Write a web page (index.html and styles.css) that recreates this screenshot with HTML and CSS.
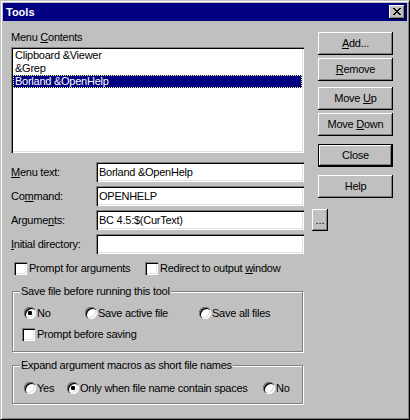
FILE: index.html
```html
<!DOCTYPE html>
<html>
<head>
<meta charset="utf-8">
<link rel="stylesheet" href="styles.css">
</head>
<body>
<div class="window">
  <div class="titlebar">
    <span class="title">Tools</span>
    <div class="close-btn">
      <svg class="close-x" width="8" height="7" viewBox="0 0 8 7" shape-rendering="crispEdges"><path fill="#000" d="M0 0h2v1H0zM6 0h2v1H6zM1 1h2v1H1zM5 1h2v1H5zM2 2h4v1H2zM3 3h2v1H3zM2 4h4v1H2zM1 5h2v1H1zM5 5h2v1H5zM0 6h2v1H0zM6 6h2v1H6z"/></svg>
    </div>
  </div>
  <div class="body">
    <div class="left">
      <div class="list-label">Menu <span class="acc">C</span>ontents</div>
      <div class="listbox">
        <div class="item">Clipboard &amp;Viewer</div>
        <div class="item">&amp;Grep</div>
        <div class="item selected">Borland &amp;OpenHelp</div>
      </div>
      <div class="fields">
        <div class="frow"><span class="flabel"><span class="acc">M</span>enu text:</span><div class="field">Borland &amp;OpenHelp</div></div>
        <div class="frow"><span class="flabel">Co<span class="acc">m</span>mand:</span><div class="field">OPENHELP</div></div>
        <div class="frow"><span class="flabel">Argume<span class="acc">n</span>ts:</span><div class="field">BC 4.5:$(CurText)</div><div class="ellipsis">...</div></div>
        <div class="frow"><span class="flabel"><span class="acc">I</span>nitial directory:</span><div class="field"></div></div>
      </div>
      <div class="checks">
        <div class="opt opt-prompt"><span class="check"></span><span>Prompt for arguments</span></div>
        <div class="opt"><span class="check"></span><span>Redirect to output <span class="acc">w</span>indow</span></div>
      </div>
      <fieldset class="group group-save">
        <legend>Save file before running this tool</legend>
        <div class="radios">
          <div class="opt opt-no"><span class="radio on"></span><span>No</span></div>
          <div class="opt opt-active"><span class="radio"></span><span>Save active file</span></div>
          <div class="opt"><span class="radio"></span><span>Save all files</span></div>
        </div>
        <div class="opt prompt-save"><span class="check"></span><span>Prompt before saving</span></div>
      </fieldset>
      <fieldset class="group group-expand">
        <legend>Expand argument macros as short file names</legend>
        <div class="radios radios-expand">
          <div class="opt opt-yes"><span class="radio"></span><span>Yes</span></div>
          <div class="opt opt-only"><span class="radio on"></span><span>Only when file name contain spaces</span></div>
          <div class="opt"><span class="radio"></span><span>No</span></div>
        </div>
      </fieldset>
    </div>
    <div class="buttons">
      <div class="btn"><span><span class="acc">A</span>dd...</span></div>
      <div class="btn btn-next"><span><span class="acc">R</span>emove</span></div>
      <div class="btn btn-group"><span>Move <span class="acc">U</span>p</span></div>
      <div class="btn btn-next"><span>Move <span class="acc">D</span>own</span></div>
      <div class="btn btn-default btn-far"><span>Close</span></div>
      <div class="btn btn-far"><span>Help</span></div>
    </div>
  </div>
</div>
</body>
</html>
```
FILE: styles.css
```css
* { box-sizing: border-box; }

body {
  margin: 0;
  font-family: "Liberation Sans", Arial, sans-serif;
  font-size: 11px;
  letter-spacing: -0.25px;
  color: #000;
  background: #c0c0c0;
}

.acc { text-decoration: underline; }

.window {
  width: 410px;
  height: 420px;
  background: #c0c0c0;
  border: 1px solid;
  border-color: #c0c0c0 #000 #000 #c0c0c0;
  box-shadow: inset 1px 1px #fff, inset -1px -1px #808080;
  padding: 2px;
  display: flex;
  flex-direction: column;
}

.titlebar {
  height: 18px;
  flex: none;
  background: #000080;
  display: flex;
  align-items: center;
  justify-content: space-between;
  padding: 0 2px 0 3px;
}

.title {
  color: #fff;
  font-weight: bold;
  line-height: 18px;
  letter-spacing: 0;
}

.close-btn {
  width: 16px;
  height: 14px;
  background: #c0c0c0;
  box-shadow: inset -1px -1px #000, inset 1px 1px #fff, inset -2px -2px #808080;
  padding: 3px 0 0 4px;
}

.close-x { display: block; }

.body {
  display: flex;
  flex: 1;
  padding-left: 8px;
}

.left {
  width: 307px;
  flex: none;
  display: flex;
  flex-direction: column;
}

.list-label {
  margin-top: 10px;
  line-height: 13px;
}

.sunken, .listbox, .field, .check {
  background: #fff;
  box-shadow: inset 1px 1px #808080, inset 2px 2px #000, inset -1px -1px #fff, inset -2px -2px #dfdfdf;
}

.listbox {
  margin-top: 3px;
  width: 293px;
  height: 106px;
  padding: 2px;
}

.item {
  height: 13px;
  line-height: 13px;
  padding-left: 2px;
  white-space: nowrap;
}

.item.selected {
  background: #000080;
  color: #fff;
  outline: 1px dotted #ffff80;
  outline-offset: -1px;
}

.fields {
  margin-top: 9px;
  display: flex;
  flex-direction: column;
  gap: 4px;
}

.frow {
  display: flex;
  align-items: center;
  height: 20px;
}

.flabel {
  width: 85px;
  flex: none;
  line-height: 13px;
}

.field {
  width: 208px;
  height: 20px;
  flex: none;
  padding-left: 3px;
  line-height: 20px;
  white-space: nowrap;
}

.ellipsis {
  width: 16px;
  height: 22px;
  flex: none;
  margin-left: 8px;
  background: #c0c0c0;
  box-shadow: inset -1px -1px #000, inset 1px 1px #fff, inset -2px -2px #808080;
  text-align: center;
  line-height: 22px;
  letter-spacing: 0;
}

.checks {
  margin-top: 8px;
  display: flex;
  height: 13px;
  padding-left: 3px;
}

.opt {
  display: flex;
  align-items: flex-start;
  line-height: 13px;
  white-space: nowrap;
}

.opt-prompt { width: 131px; flex: none; }

.check {
  width: 13px;
  height: 13px;
  flex: none;
  margin-right: 2px;
}

.group {
  margin: 10px 0 0 1px;
  width: 291px;
  min-width: 0;
  border: 1px solid #808080;
  box-shadow: inset 1px 1px #fff, 1px 1px #fff;
  padding: 0 0 10px 0;
}

.group legend {
  margin-left: 7px;
  padding: 0 1px;
  line-height: 13px;
  background: #c0c0c0;
}

.group-expand {
  margin-top: 7px;
  padding-bottom: 8px;
}

.radios {
  display: flex;
  margin-top: 9px;
  padding-left: 11px;
}

.radios-expand { margin-top: 10px; }

.opt-no { width: 61px; flex: none; }
.opt-active { width: 114px; flex: none; }
.opt-yes { width: 43px; flex: none; }
.opt-only { width: 196px; flex: none; }

.radio {
  position: relative;
  width: 12px;
  height: 12px;
  flex: none;
  margin-right: 1px;
  border-radius: 50%;
  background: #fff;
  box-shadow: inset 1px 1px #808080, inset 2px 2px #000, inset -1px -1px #fff, inset -2px -2px #dfdfdf;
}

.radio.on::after {
  content: "";
  position: absolute;
  left: 4px;
  top: 4px;
  width: 4px;
  height: 4px;
  border-radius: 1px;
  background: #000;
}

.prompt-save {
  margin-top: 8px;
  padding-left: 9px;
}

.buttons {
  width: 75px;
  flex: none;
  margin-left: 0;
  padding-top: 11px;
  display: flex;
  flex-direction: column;
}

.btn {
  height: 23px;
  display: flex;
  align-items: center;
  justify-content: center;
  line-height: 13px;
  background: #c0c0c0;
  box-shadow: inset -1px -1px #000, inset 1px 1px #fff, inset -2px -2px #808080;
}

.btn-next { margin-top: 3px; }
.btn-group { margin-top: 6px; }
.btn-far { margin-top: 8px; }

.btn-default {
  border: 1px solid #000;
}
```
